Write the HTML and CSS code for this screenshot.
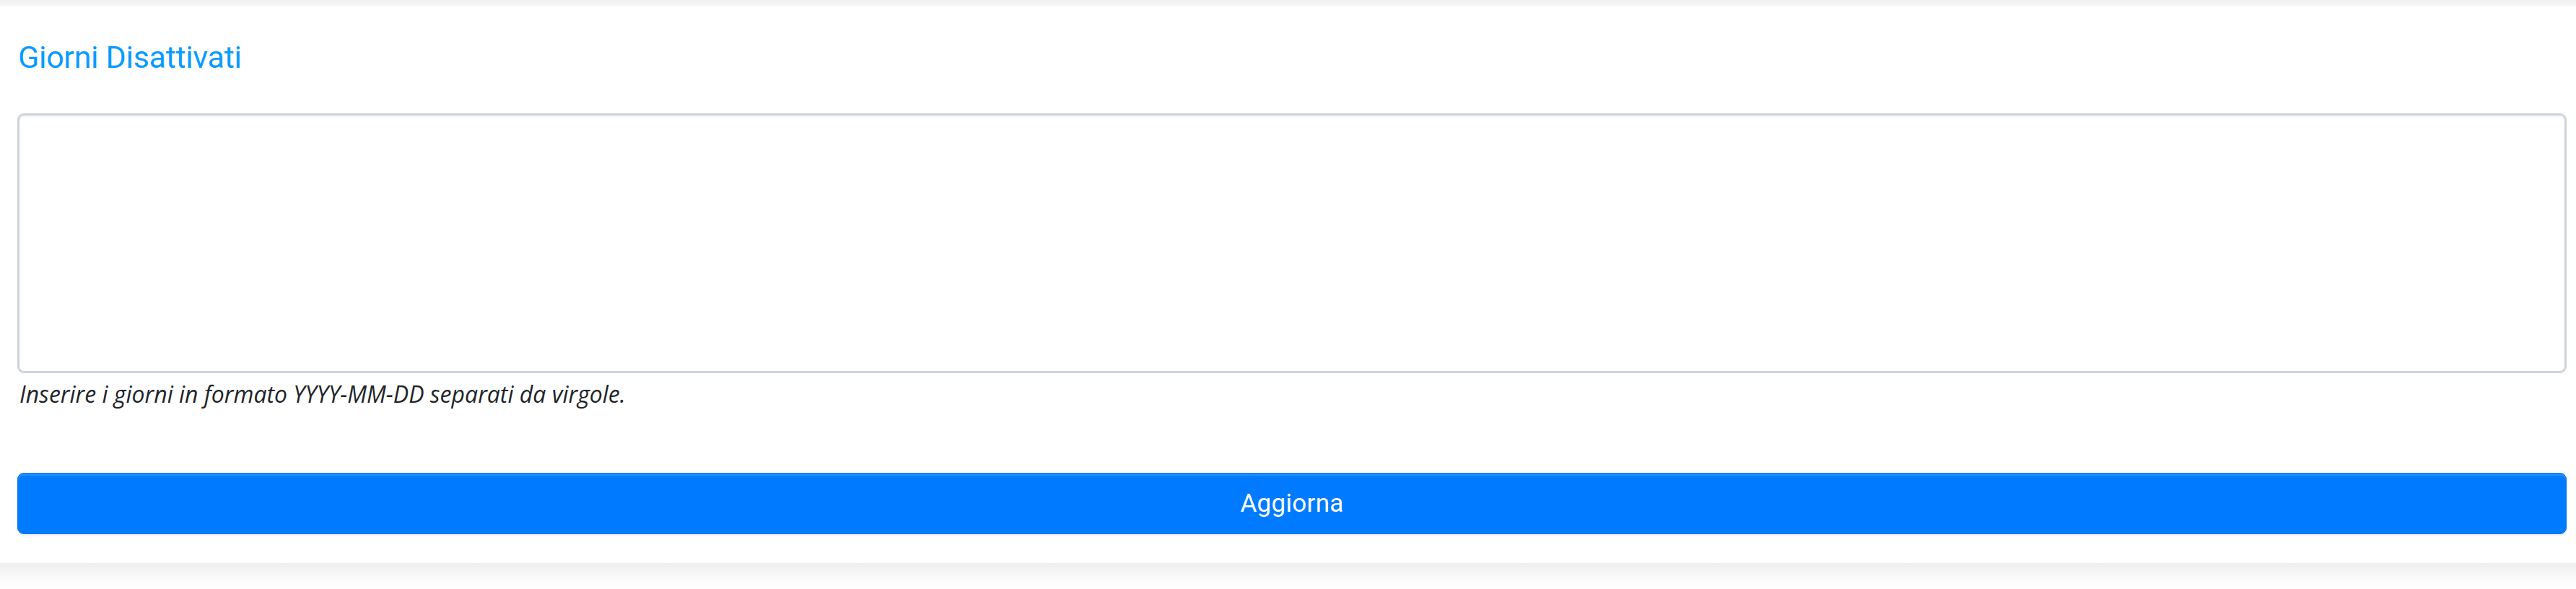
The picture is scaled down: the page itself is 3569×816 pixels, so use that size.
FILE: index.html
```html
<!DOCTYPE html>
<html lang="it">
<head>
<meta charset="utf-8">
<title>Giorni Disattivati</title>
<link rel="stylesheet" href="styles.css">
</head>
<body>
<div class="top-shade"></div>
<main class="card">
  <h2 class="title">Giorni Disattivati</h2>
  <div class="field">
    <textarea class="input" aria-label="Giorni Disattivati"></textarea>
    <small class="help">Inserire i giorni in formato YYYY-MM-DD separati da virgole.</small>
  </div>
  <button class="btn" type="button">Aggiorna</button>
</main>
<div class="bottom-shade"></div>
</body>
</html>
```
FILE: styles.css
```css
html, body {
  margin: 0;
  padding: 0;
  background: #ffffff;
}
body {
  width: 3569px;
  height: 816px;
  overflow: hidden;
  display: flex;
  flex-direction: column;
  font-family: "Roboto", "Liberation Sans", sans-serif;
}
.top-shade {
  height: 9px;
  background: linear-gradient(#f0f0f0, #f8f8f8);
  flex: none;
}
.card {
  flex: none;
  height: 771px;
  box-sizing: border-box;
  padding: 0 13px 0 24px;
  display: flex;
  flex-direction: column;
}
.title {
  margin: 42px 0 0 1px;
  font-family: "Roboto", sans-serif;
  font-weight: 400;
  font-size: 43px;
  line-height: 56px;
  color: #0a9bff;
  height: 56px;
  letter-spacing: -0.3px;
}
.field {
  margin-top: 50px;
  display: flex;
  flex-direction: column;
}
.input {
  display: block;
  box-sizing: border-box;
  width: 100%;
  height: 360px;
  margin: 0;
  border: 3px solid #ced4da;
  border-radius: 9px;
  background: #fff;
  resize: none;
  box-shadow: inset 0 2px 3px rgba(0,0,0,0.05);
}
.help {
  margin: 8px 0 0 3px;
  font-family: "Open Sans", sans-serif;
  font-style: italic;
  font-size: 32px;
  line-height: 42px;
  color: #212529;
}
.btn {
  margin-top: 88px;
  height: 85px;
  width: 100%;
  box-sizing: border-box;
  border: 1px solid #0074f0;
  border-radius: 9px;
  background: #007bff;
  color: #fff;
  font-family: "Roboto", sans-serif;
  font-size: 35px;
  letter-spacing: 0.3px;
  box-shadow: inset 0 3px 0 rgba(255,255,255,0.12), 0 2px 3px rgba(0,0,0,0.08);
  padding: 0;
}
.bottom-shade {
  flex: 1;
  background: linear-gradient(#eeeeee, #fbfbfb 60%, #ffffff);
}
```
